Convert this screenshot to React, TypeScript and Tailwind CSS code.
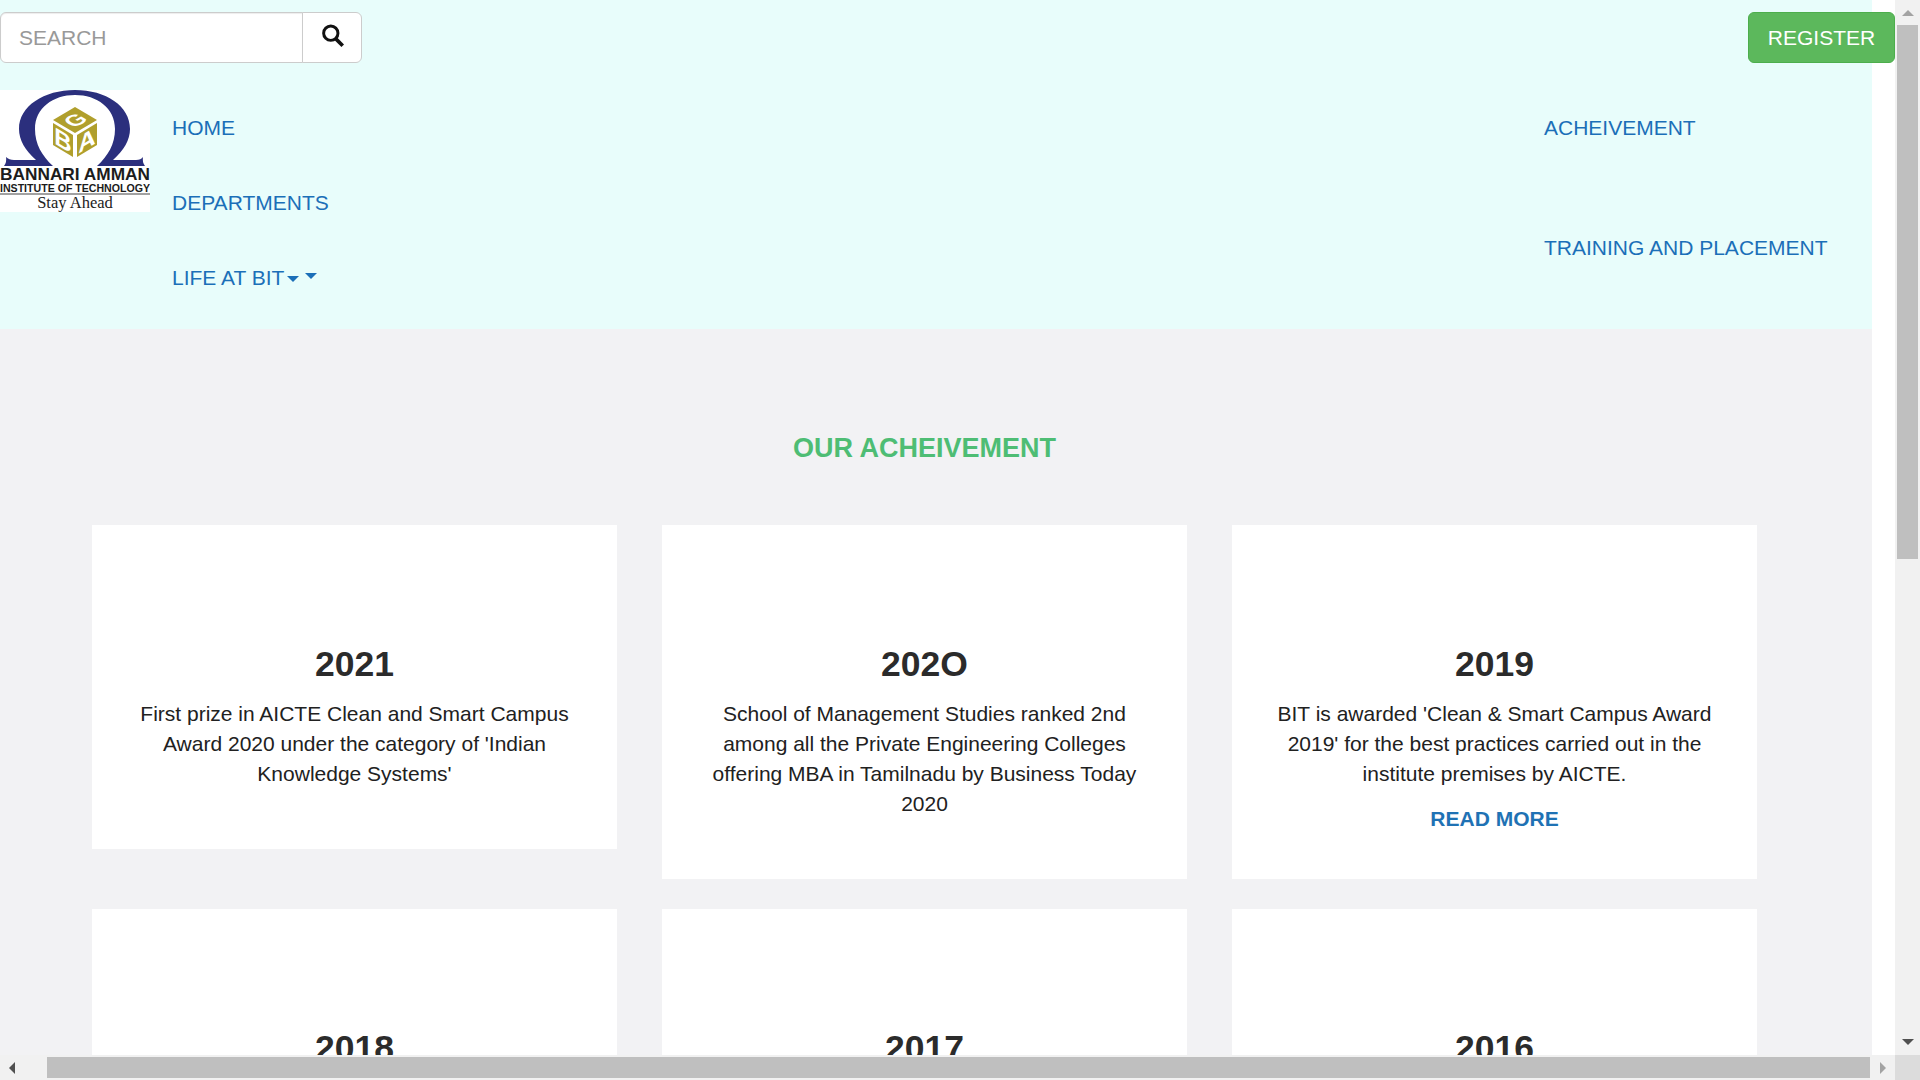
const cards = [
  { year: "2021", text: "First prize in AICTE Clean and Smart Campus Award 2020 under the category of 'Indian Knowledge Systems'" },
  { year: "202O", text: "School of Management Studies ranked 2nd among all the Private Engineering Colleges offering MBA in Tamilnadu by Business Today 2020" },
  { year: "2019", text: "BIT is awarded 'Clean & Smart Campus Award 2019' for the best practices carried out in the institute premises by AICTE.", more: true },
  { year: "2018", text: "" },
  { year: "2017", text: "" },
  { year: "2016", text: "" },
];

function Logo() {
  return (
    <svg viewBox="0 0 150 122" className="w-[150px] h-[122px] shrink-0 bg-white">
      <path
        fill="#2b2f7d"
        d="M4 76 Q7 72 6 67 Q9 70 14 70 L36 70 C25 60 19 50 19 39 C19 16 44 0 75 0 C106 0 130 16 130 39 C130 50 124 60 113 70 L136 70 Q141 70 143 67 Q142 72 145 76 L97 76 C108 66 115 54 115 39 C115 18 97 5 75 5 C53 5 35 18 35 39 C35 54 42 66 53 76 Z"
      />
      <g fill="#b09f2c">
        <polygon points="75,17 97,30 75,43 53,30" />
        <polygon points="53,33 73,45 73,67 53,55" />
        <polygon points="77,45 97,33 97,55 77,67" />
      </g>
      <g fill="#ffffff" fontFamily="Liberation Sans" fontWeight="700" textAnchor="middle">
        <text fontSize="22" transform="matrix(0.86 -0.5 0.86 0.5 81.9 34)">G</text>
        <text fontSize="24" transform="matrix(1 0.6 0 1 63 58.5)">B</text>
        <text fontSize="24" transform="matrix(1 -0.6 0 1 87 58.5)">A</text>
      </g>
      <text x="0" y="90" fontFamily="Liberation Sans" fontWeight="700" fontSize="16.5" textLength="150" lengthAdjust="spacingAndGlyphs" fill="#1c1c1c">
        BANNARI AMMAN
      </text>
      <text x="0" y="102" fontFamily="Liberation Sans" fontWeight="700" fontSize="10.5" textLength="150" lengthAdjust="spacingAndGlyphs" fill="#1c1c1c">
        INSTITUTE OF TECHNOLOGY
      </text>
      <rect x="0" y="103.5" width="150" height="1" fill="#444444" />
      <text x="75" y="118" fontFamily="Liberation Serif" fontSize="16.5" textAnchor="middle" fill="#222222">
        Stay Ahead
      </text>
    </svg>
  );
}

function SearchIcon() {
  return (
    <svg viewBox="0 0 22 22" className="w-[25px] h-[25px]" fill="none" stroke="#111111">
      <circle cx="9.5" cy="9" r="6.3" strokeWidth="2.6" />
      <path d="M14 14 L20 20" strokeWidth="3.2" />
    </svg>
  );
}

function Caret() {
  return <span className="w-0 h-0 border-x-[6px] border-t-[6px] border-x-transparent border-t-[#1b6fb8]" />;
}

function App() {
  return (
    <div className="w-[1920px] h-screen flex flex-col overflow-hidden bg-white font-['Liberation_Sans',Arial,sans-serif]">
      <div className="flex flex-1 min-h-0">
        <div className="w-[1895px] overflow-hidden">
          <div className="w-[1872px]">
            <header className="bg-[#e8fdfb] h-[329px] pt-3">
              <div className="w-[1895px] flex justify-between h-[51px]">
                <div className="flex w-[362px]">
                  <input
                    placeholder="SEARCH"
                    className="w-[303px] h-[51px] pl-[18px] text-[21px] bg-white border border-[#cccccc] rounded-l-md shadow-[inset_0_1px_1px_rgba(0,0,0,0.075)] placeholder:text-[#999999] outline-none"
                  />
                  <button className="flex-1 -ml-px flex items-center justify-center bg-white border border-[#cccccc] rounded-r-md pb-1">
                    <SearchIcon />
                  </button>
                </div>
                <button className="w-[147px] bg-[#5cb85c] border border-[#4cae4c] rounded-md text-white text-[21px]">
                  REGISTER
                </button>
              </div>

              <nav className="flex mt-[27px] text-[21px] text-[#1b6fb8]">
                <Logo />
                <div className="pl-[22px]">
                  <div className="h-[75px] flex items-center">HOME</div>
                  <div className="h-[75px] flex items-center">DEPARTMENTS</div>
                  <div className="h-[75px] flex items-center">
                    LIFE AT BIT
                    <span className="ml-[3px] mt-[2px] flex"><Caret /></span>
                    <span className="ml-[6px] -mt-[4px] flex"><Caret /></span>
                  </div>
                </div>
                <div className="ml-auto w-[328px]">
                  <div className="h-[75px] flex items-center">ACHEIVEMENT</div>
                  <div className="mt-[45px] h-[75px] flex items-center">TRAINING AND PLACEMENT</div>
                </div>
              </nav>
            </header>

            <section className="bg-[#f2f2f4] pt-[99px] pb-10">
              <div className="w-[1665px] ml-[92px]">
                <h2 className="text-center text-[27px] leading-[40px] font-bold text-[#4ebd74] mb-[57px]">OUR ACHEIVEMENT</h2>
                <div className="grid grid-cols-3 gap-x-[45px] gap-y-[30px] items-start">
                  {cards.map((card) => (
                    <div key={card.year} className="bg-white px-[45px] pt-[119px] pb-[45px] text-center">
                      <h3 className="text-[35.5px] leading-[40px] font-bold text-[#2b2b2b] mb-[15px]">{card.year}</h3>
                      <p className="text-[21px] leading-[30px] text-[#212121] mb-[15px]">{card.text}</p>
                      {card.more && <a className="block text-[21px] leading-[30px] font-bold text-[#1f72b4]">READ MORE</a>}
                    </div>
                  ))}
                </div>
              </div>
            </section>
          </div>
        </div>

        {/* vertical scrollbar */}
        <div className="w-[25px] bg-[#f1f1f1] flex flex-col items-center">
          <div className="h-[25px] flex items-center justify-center">
            <span className="w-0 h-0 border-x-[6px] border-b-[6px] border-x-transparent border-b-[#a3a3a3]" />
          </div>
          <div className="w-[21px] h-[534px] bg-[#bfbfbf]" />
          <div className="flex-1 w-full flex items-end justify-center pb-[10px]">
            <span className="w-0 h-0 border-x-[6px] border-t-[6px] border-x-transparent border-t-[#505050]" />
          </div>
        </div>
      </div>

      {/* horizontal scrollbar */}
      <div className="h-[25px] flex items-center bg-[#f1f1f1]">
        <div className="w-[47px] pl-[9px] flex items-center">
          <span className="w-0 h-0 border-y-[6px] border-r-[6px] border-y-transparent border-r-[#505050]" />
        </div>
        <div className="w-[1823px] h-[21px] bg-[#bfbfbf]" />
        <div className="w-[25px] pl-[10px] flex items-center">
          <span className="w-0 h-0 border-y-[6px] border-l-[6px] border-y-transparent border-l-[#a3a3a3]" />
        </div>
        <div className="w-[25px] h-full bg-[#dcdcdc]" />
      </div>
    </div>
  );
}

export default App;
